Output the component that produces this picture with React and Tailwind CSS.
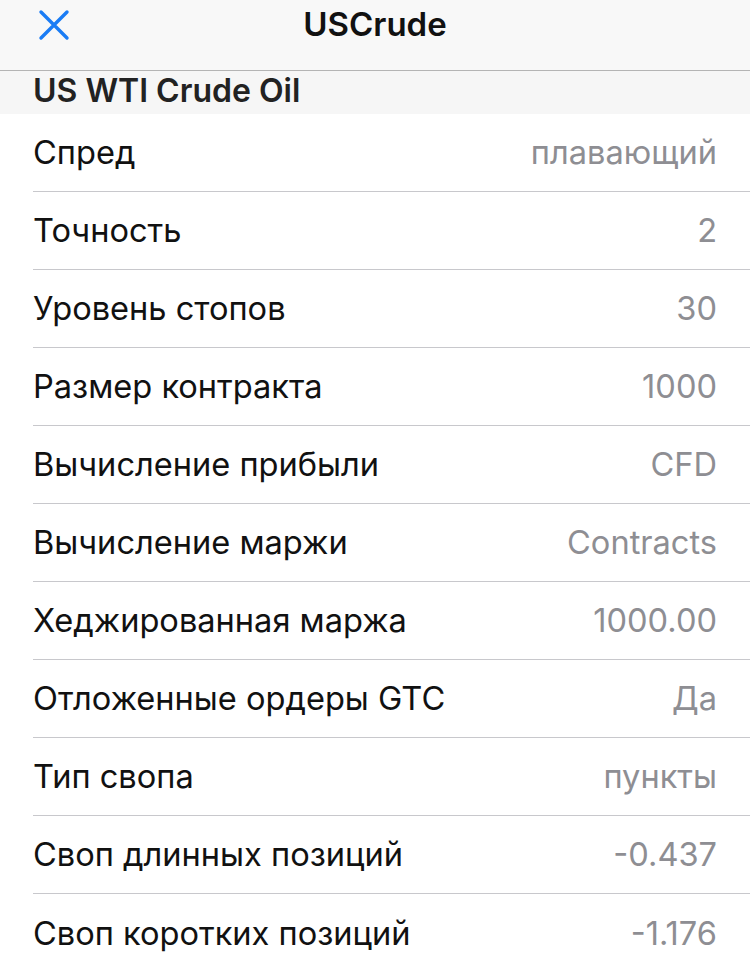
import React from 'react'

const rows = [
    ['Спред', 'плавающий'],
    ['Точность', '2'],
    ['Уровень стопов', '30'],
    ['Размер контракта', '1000'],
    ['Вычисление прибыли', 'CFD'],
    ['Вычисление маржи', 'Contracts'],
    ['Хеджированная маржа', '1000.00'],
    ['Отложенные ордеры GTC', 'Да'],
    ['Тип свопа', 'пункты'],
    ['Своп длинных позиций', '-0.437'],
    ['Своп коротких позиций', '-1.176'],
]

function App() {
    return (
        <div className="w-[750px] h-[968px] overflow-hidden bg-white" style={{ fontFamily: 'Inter, Roboto, "Liberation Sans", sans-serif' }}>
            <div className="relative h-[71px] bg-[#f8f8f8] border-b border-[#b4b4b4] flex items-center justify-center">
                <button className="absolute left-[38px] top-[9px] w-[32px] h-[32px] text-[#1a7cf5]">
                    <svg viewBox="0 0 32 32" className="w-full h-full" fill="none" stroke="currentColor" strokeWidth="3.4" strokeLinecap="round">
                        <path d="M3 3 L29 29 M29 3 L3 29" />
                    </svg>
                </button>
                <h1 className="text-[33px] font-semibold text-[#111] -mt-[20px]">USCrude</h1>
            </div>
            <div className="h-[43px] bg-[#f6f6f6] px-[33px] flex items-center">
                <h2 className="text-[32px] font-semibold text-[#222] -mt-[4px]">US WTI Crude Oil</h2>
            </div>
            <div className="pl-[33px]">
                {rows.map(([label, value], i) => (
                    <div key={label} className={'h-[78px] flex items-center justify-between pr-[33px] ' + (i < rows.length - 1 ? 'border-b border-[#c8c8cc]' : '')}>
                        <span className="text-[32.6px] text-[#111]">{label}</span>
                        <span className="text-[32.6px] text-[#8e8e93]">{value}</span>
                    </div>
                ))}
            </div>
        </div>
    )
}

export default App
